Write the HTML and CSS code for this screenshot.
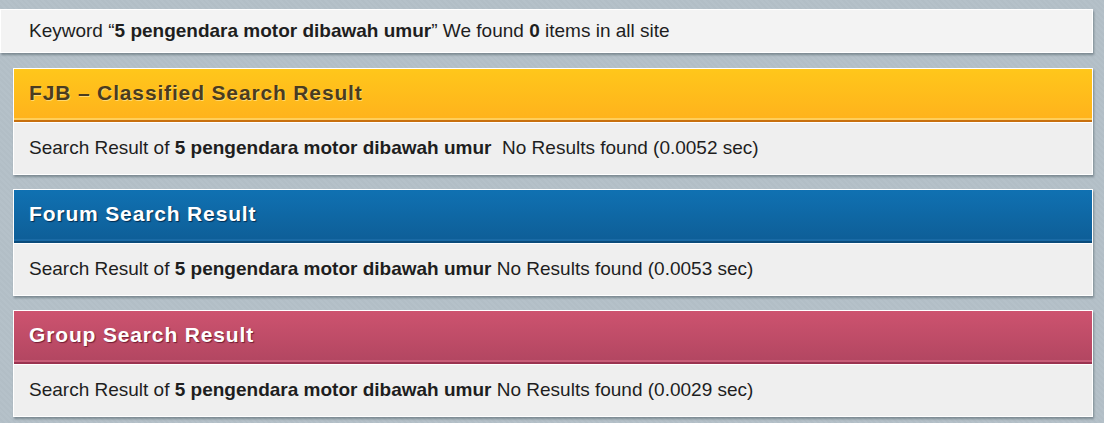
FILE: index.html
```html
<!DOCTYPE html>
<html>
<head>
<meta charset="utf-8">
<link rel="stylesheet" href="styles.css">
</head>
<body>
<div class="page">
  <div class="keyword-box">Keyword “<b>5 pengendara motor dibawah umur</b>” We found <b>0</b> items in all site</div>

  <div class="panel">
    <div class="panel-head fjb">FJB – Classified Search Result</div>
    <div class="panel-body">Search Result of <b>5 pengendara motor dibawah umur</b>&nbsp; No Results found (0.0052 sec)</div>
  </div>

  <div class="panel">
    <div class="panel-head forum">Forum Search Result</div>
    <div class="panel-body">Search Result of <b>5 pengendara motor dibawah umur</b> No Results found (0.0053 sec)</div>
  </div>

  <div class="panel">
    <div class="panel-head group">Group Search Result</div>
    <div class="panel-body">Search Result of <b>5 pengendara motor dibawah umur</b> No Results found (0.0029 sec)</div>
  </div>
</div>
</body>
</html>
```
FILE: styles.css
```css
html, body {
  margin: 0;
  padding: 0;
}
body {
  background: #b4c0c8;
  background-image: repeating-linear-gradient(45deg, rgba(255,255,255,0.02) 0 2px, rgba(0,0,0,0.01) 2px 4px);
  font-family: "Liberation Sans", Arial, sans-serif;
  color: #1e1e1e;
  width: 1104px;
  height: 423px;
  overflow: hidden;
}
.page {
  padding-top: 9px;
  display: flex;
  flex-direction: column;
  width: 1093px;
}
.keyword-box {
  height: 42px;
  background: #f3f3f3;
  border: 1px solid #ffffff;
  box-shadow: 1px 2px 2px rgba(60, 75, 85, 0.45);
  font-size: 19px;
  line-height: 41px;
  padding-left: 28px;
}
.panel {
  margin-left: 13px;
  margin-top: 15px;
  border: 1px solid #ffffff;
  background: #efefef;
  box-shadow: 1px 2px 2px rgba(60, 75, 85, 0.45);
  display: flex;
  flex-direction: column;
}
.panel + .panel {
  margin-top: 14px;
}
.panel-head {
  height: 51px;
  line-height: 48px;
  padding-left: 15px;
  font-size: 21px;
  font-weight: bold;
  letter-spacing: 0.85px;
}
.panel-head.fjb {
  background: linear-gradient(#ffc71b, #ffb21c);
  color: #4a3c1f;
  text-shadow: 1px 1px 0 rgba(255, 230, 150, 0.7);
  border-bottom: 2px solid #c8700e;
  box-shadow: inset 0 -2px 0 #ffce5a;
}
.panel-head.forum {
  background: linear-gradient(#1071b2, #0e5e97);
  color: #ffffff;
  text-shadow: 1px 1px 1px rgba(0, 30, 60, 0.8);
  border-bottom: 2px solid #0b4b7a;
  box-shadow: inset 0 -2px 0 #1a6aa5;
}
.panel-head.group {
  background: linear-gradient(#cd536f, #b24661);
  color: #ffffff;
  text-shadow: 1px 1px 1px rgba(80, 10, 30, 0.7);
  border-bottom: 2px solid #9a3350;
  box-shadow: inset 0 -2px 0 #c95d78;
}
.panel-body {
  height: 52px;
  line-height: 50px;
  padding-left: 15px;
  font-size: 19px;
  border-top: 1px solid #ffffff;
  box-sizing: border-box;
}
```
